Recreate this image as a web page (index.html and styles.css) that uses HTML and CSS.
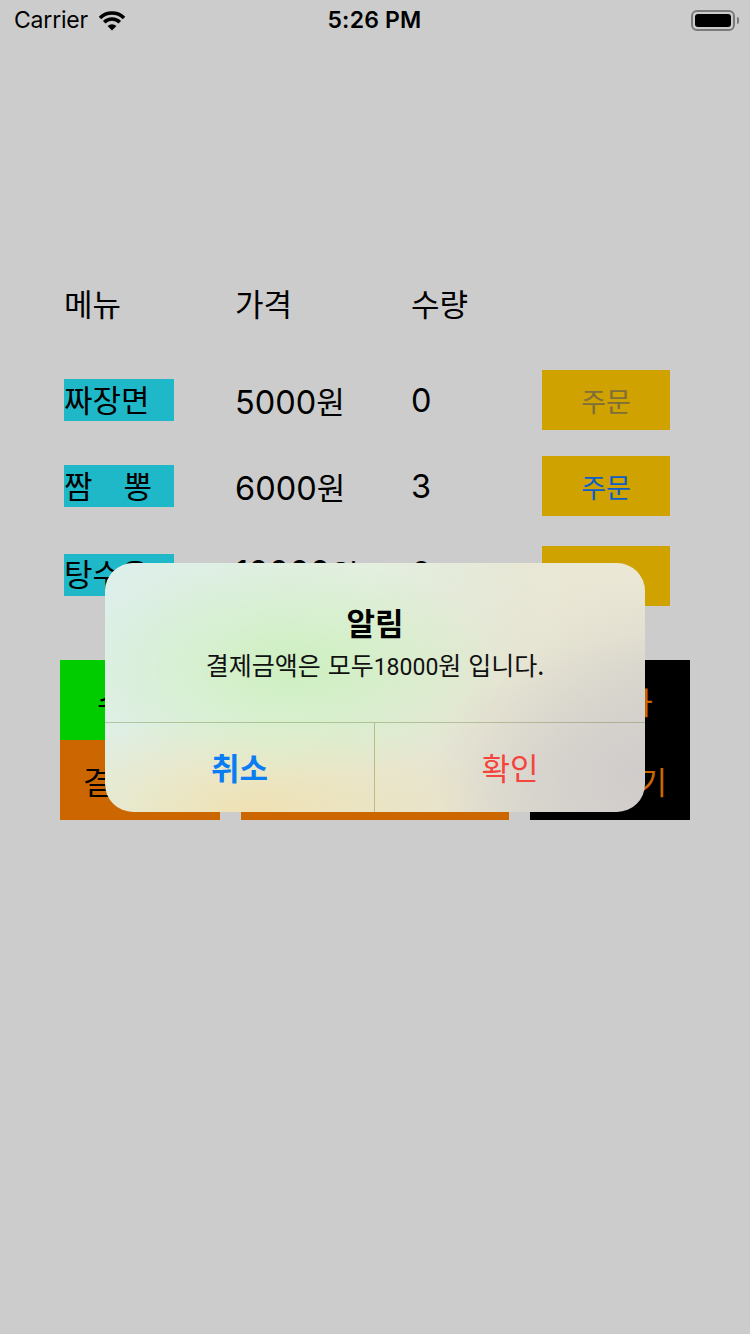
FILE: index.html
```html
<!DOCTYPE html>
<html lang="ko">
<head>
<meta charset="utf-8">
<link rel="stylesheet" href="styles.css">
</head>
<body>
<div class="screen">
  <header class="status">
    <div class="carrier">Carrier
      <svg class="wifi" viewBox="0 0 30 22" width="30" height="22">
        <path d="M3 9 A17 17 0 0 1 27 9" fill="none" stroke="#000" stroke-width="3.6"/>
        <path d="M7.2 13.2 A11 11 0 0 1 22.8 13.2" fill="none" stroke="#000" stroke-width="3.6"/>
        <path d="M15 21.5 L10.6 17.1 A6.2 6.2 0 0 1 19.4 17.1 Z" fill="#000"/>
      </svg>
    </div>
    <div class="time">5:26 PM</div>
    <div class="battery"><span class="batt-body"><span class="batt-fill"></span></span><span class="batt-nub"></span></div>
  </header>

  <main class="content">
    <div class="row head"><span>메뉴</span><span>가격</span><span>수량</span></div>
    <div class="row item r1">
      <span class="name">짜장면</span>
      <span class="price"><span class="num">5000</span>원</span>
      <span class="qty num">0</span>
      <span class="order dim">주문</span>
    </div>
    <div class="row item r2">
      <span class="name">짬&emsp;뽕</span>
      <span class="price"><span class="num">6000</span>원</span>
      <span class="qty num">3</span>
      <span class="order blue">주문</span>
    </div>
    <div class="row item r3">
      <span class="name">탕수육</span>
      <span class="price lift"><span class="num raise">10000</span>원</span>
      <span class="qty num lift">0</span>
      <span class="order blue">주문</span>
    </div>

    <div class="actions">
      <div class="act green">수량합</div>
      <div class="act orange">결제하기</div>
      <div class="act orange mid">결제금액</div>
      <div class="act black"><span>초기화</span><span>다시하기</span></div>
    </div>
  </main>

  <div class="alert">
    <div class="alert-body">
      <div class="alert-title">알림</div>
      <div class="alert-msg">결제금액은 모두<span class="msg-num">18000</span>원 입니다.</div>
    </div>
    <div class="alert-actions">
      <div class="alert-btn cancel">취소</div>
      <div class="alert-btn ok">확인</div>
    </div>
  </div>
</div>
</body>
</html>
```

FILE: styles.css
```css
* { box-sizing: border-box; }
html, body { margin: 0; padding: 0; }
body {
  background: #cccccc;
  font-family: "Inter", "Noto Sans CJK KR", sans-serif;
  color: #000;
}
.screen {
  position: relative;
  width: 750px;
  height: 1334px;
  overflow: hidden;
}

/* status bar */
.status {
  height: 40px;
  display: grid;
  grid-template-columns: 1fr auto 1fr;
  align-items: center;
  padding: 0 11px 0 14px;
}
.carrier {
  display: flex;
  align-items: center;
  gap: 9px;
  font-size: 23px;
  letter-spacing: -0.2px;
}
.wifi { display: block; margin-top: -1px; }
.time {
  font-size: 23px;
  font-weight: 600;
  padding-right: 4px;
  letter-spacing: 0.2px;
}
.battery {
  justify-self: end;
  display: flex;
  align-items: center;
  gap: 2px;
}
.batt-body {
  width: 44px;
  height: 21px;
  border: 2px solid #7a7a7a;
  border-radius: 6px;
  padding: 2px;
  display: flex;
}
.batt-fill {
  flex: 1;
  background: #000;
  border-radius: 3px;
}
.batt-nub {
  width: 2px;
  height: 7px;
  background: #7a7a7a;
  border-radius: 0 2px 2px 0;
}

/* content */
.content {
  padding-top: 232px;
}
.row {
  display: grid;
  grid-template-columns: 171px 176px 131px 128px;
  padding-left: 64px;
  height: 60px;
  align-items: center;
  font-size: 31px;
}
.head { margin-bottom: 38px; }
.r2 { margin-top: 26px; }
.r3 { margin-top: 30px; }
.name {
  width: 110px;
  height: 42px;
  background: #1fb8c9;
  line-height: 44px;
  white-space: nowrap;
}
.r3 .name { margin-top: -3px; line-height: 42px; }
.lift { margin-top: -6px; }
.raise { vertical-align: 3px; }
.num { font-size: 32.5px; }
.order {
  height: 60px;
  background: #cfa200;
  display: flex;
  align-items: center;
  justify-content: center;
  font-size: 27px;
}
.order.dim { color: #7d6e3a; }
.order.blue { color: #0a5fc8; }

.actions {
  margin-top: 54px;
  padding-left: 60px;
  display: grid;
  grid-template-columns: 160px 268px 160px;
  grid-template-rows: 80px 80px;
  column-gap: 21px;
  font-size: 31px;
}
.act {
  display: flex;
  align-items: center;
  justify-content: center;
}
.green { background: #00cc00; grid-column: 1; grid-row: 1; }
.orange { background: #cc6600; grid-column: 1; grid-row: 2; }
.orange.mid { grid-column: 2; grid-row: 2; }
.black {
  background: #000;
  color: #cc6600;
  grid-column: 3;
  grid-row: 1 / 3;
  flex-direction: column;
  justify-content: space-around;
}

/* alert overlay */
.alert {
  position: absolute;
  left: 105px;
  top: 563px;
  width: 540px;
  height: 249px;
  border-radius: 28px;
  overflow: hidden;
  display: flex;
  flex-direction: column;
  font-family: "Noto Sans CJK KR", sans-serif;
  background:
    radial-gradient(ellipse 40% 45% at 35% 42%, rgba(204,240,190,0.95), rgba(204,240,190,0) 100%),
    radial-gradient(ellipse 45% 40% at 28% 100%, rgba(240,224,176,0.95), rgba(240,224,176,0) 100%),
    radial-gradient(ellipse 40% 55% at 100% 85%, rgba(208,204,203,1), rgba(208,204,203,0) 100%),
    radial-gradient(ellipse 35% 40% at 100% 0%, rgba(236,232,214,1), rgba(236,232,214,0) 100%),
    linear-gradient(120deg, #dcefe9 0%, #e4efe0 40%, #e6e4d2 70%, #d6d2cc 100%);
}
.alert-body {
  height: 160px;
  padding-top: 40px;
  text-align: center;
  border-bottom: 1px solid rgba(90, 120, 50, 0.35);
}
.alert-title {
  font-size: 31px;
  font-weight: 700;
  line-height: 38px;
}
.alert-msg {
  margin-top: 6px;
  font-size: 25px;
  line-height: 34px;
  color: #111;
}
.msg-num {
  font-family: "Roboto", sans-serif;
  font-size: 23px;
}
.alert-actions {
  flex: 1;
  display: grid;
  grid-template-columns: 1fr 1fr;
}
.alert-btn {
  display: flex;
  align-items: center;
  justify-content: center;
  font-size: 31px;
  padding-bottom: 2px;
}
.cancel {
  color: #0a7cf4;
  font-weight: 700;
  border-right: 1px solid rgba(110, 130, 50, 0.4);
}
.ok {
  color: #f5443c;
}
```
